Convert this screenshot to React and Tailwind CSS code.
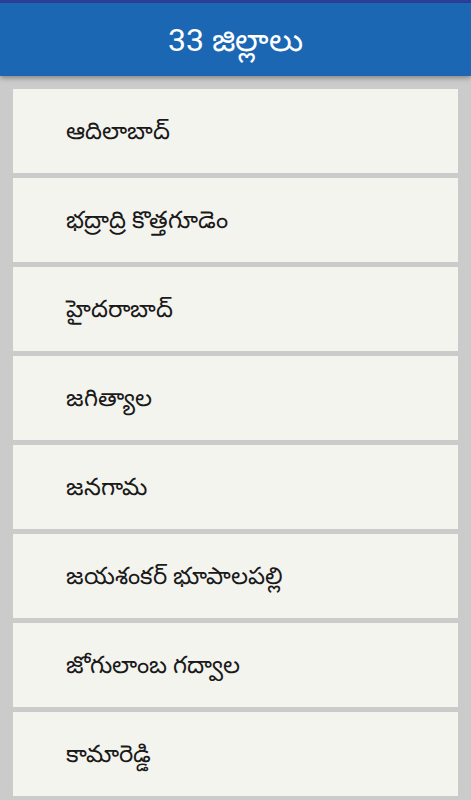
export default function App() {
  const items = [
    "ఆదిలాబాద్",
    "భద్రాద్రి కొత్తగూడెం",
    "హైదరాబాద్",
    "జగిత్యాల",
    "జనగామ",
    "జయశంకర్ భూపాలపల్లి",
    "జోగులాంబ గద్వాల",
    "కామారెడ్డి",
  ];
  return (
    <div className="w-[471px] h-[800px] overflow-hidden bg-[#cbcbcb] flex flex-col" style={{ fontFamily: 'Roboto, "Noto Sans", sans-serif' }}>
      <div className="h-[3px] shrink-0 bg-[#2d3f9c]" />
      <div className="h-[73px] shrink-0 bg-[#1b67b3] flex items-center justify-center text-white text-[32px] shadow-[0_2px_5px_rgba(0,0,0,0.35)] relative z-10">
        33 జిల్లాలు
      </div>
      <div className="flex flex-col gap-[5px] pt-[13px] px-[13px]">
        {items.map((t) => (
          <div key={t} className="h-[84px] shrink-0 bg-[#f4f4ef] flex items-center pl-[53px] text-[24px] text-[#1a1a1a]">
            {t}
          </div>
        ))}
      </div>
    </div>
  );
}
